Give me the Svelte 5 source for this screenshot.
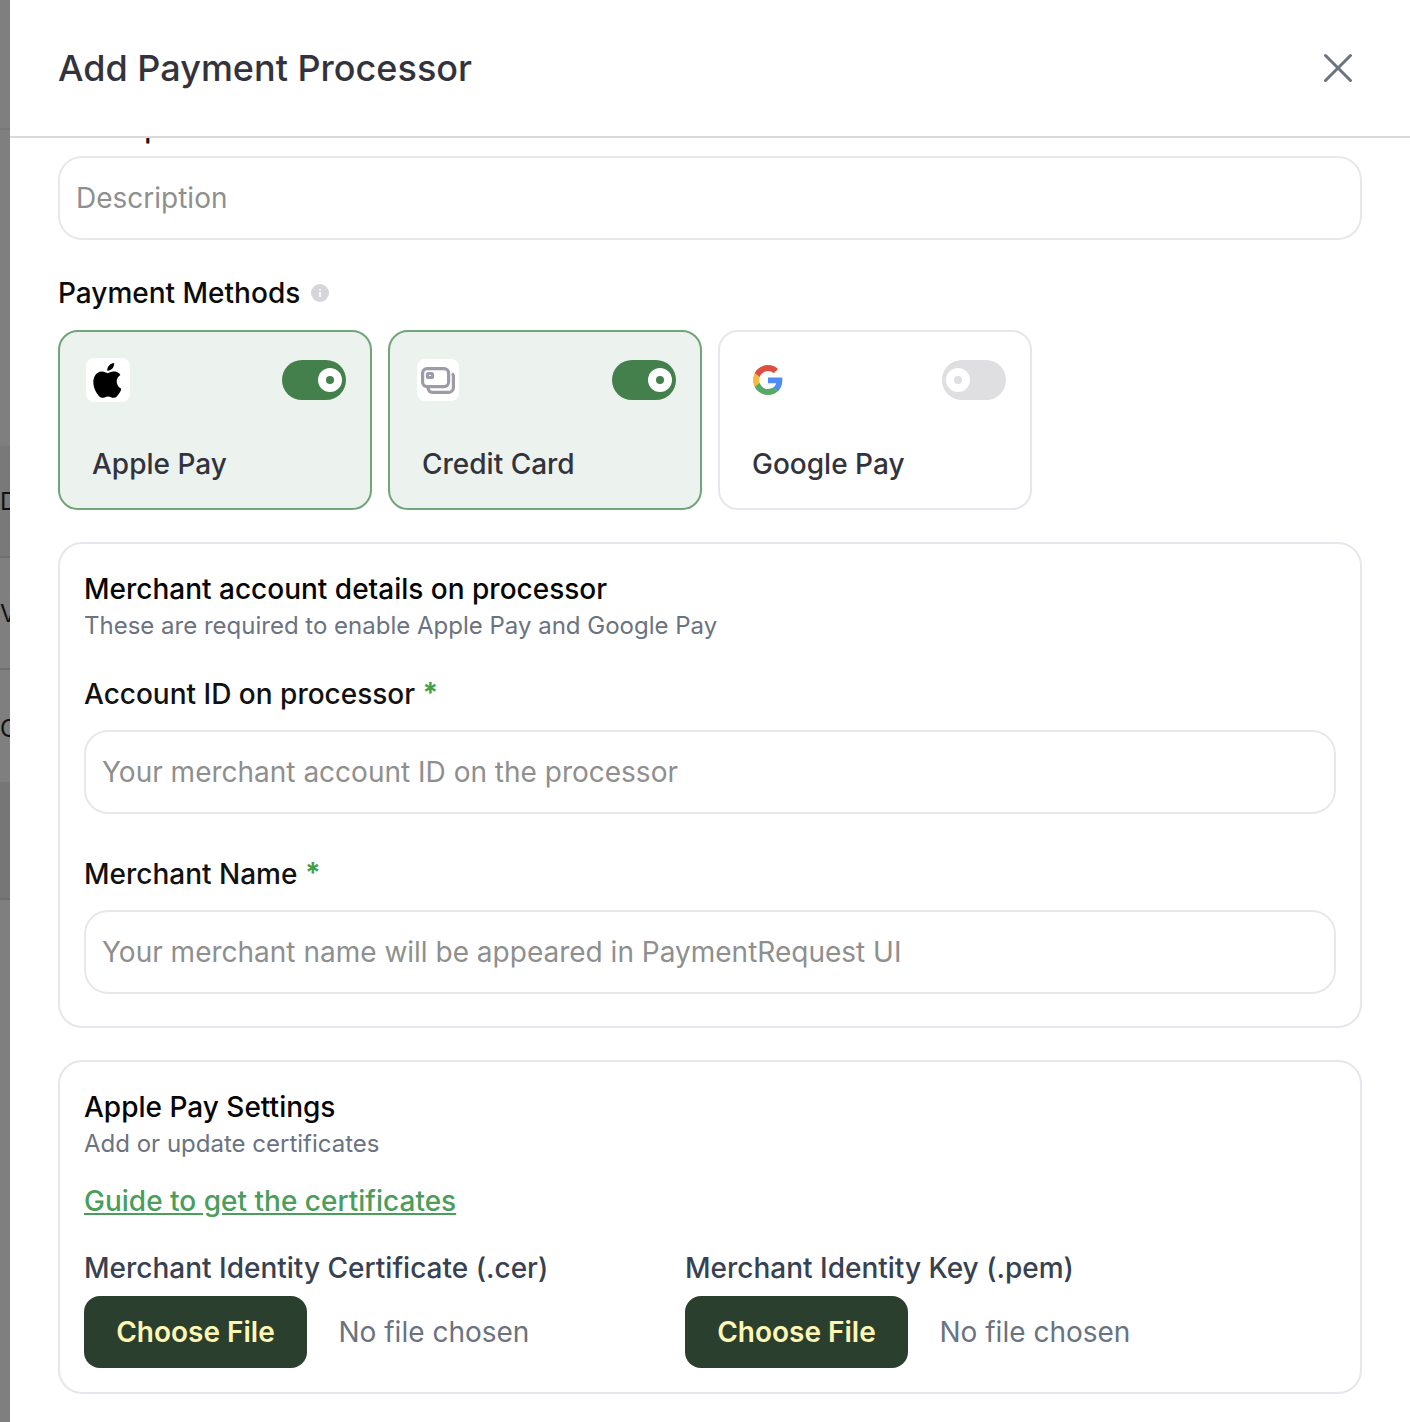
<script>
  const methods = [
    { name: 'Apple Pay', on: true, icon: 'apple' },
    { name: 'Credit Card', on: true, icon: 'card' },
    { name: 'Google Pay', on: false, icon: 'google' }
  ];
</script>

<div class="page">
  <aside class="backdrop">
    <div class="strip s0"></div>
    <div class="strip s1"></div>
    <div class="strip s2"><span>D</span></div>
    <div class="strip s3"><span>V</span></div>
    <div class="strip s4"><span>C</span></div>
    <div class="strip s5"></div>
    <div class="strip s6"></div>
  </aside>
  <main class="modal">
    <header class="head">
      <h1>Add Payment Processor</h1>
      <svg class="close" width="32" height="32" viewBox="0 0 32 32" fill="none" stroke="#6b7280" stroke-width="3" stroke-linecap="round"><path d="M3.500 3.500l25 25M28.500 3.500l-25 25" /></svg>
    </header>
    <div class="body">
      <div class="clipped">Description</div>
      <div class="input">Description</div>

      <div class="pm-label">Payment Methods
        <svg width="18" height="18" viewBox="0 0 18 18"><circle cx="9" cy="9" r="9" fill="#d6d6da"/><rect x="8.2" y="8" width="1.6" height="5" fill="#fff"/><rect x="8.2" y="5" width="1.6" height="1.6" fill="#fff"/></svg>
      </div>

      <div class="methods">
        {#each methods as m}
          <div class="method" class:on={m.on}>
            <div class="method-top">
              {#if m.icon === 'apple'}
                <div class="ico apple">
                  <svg class="apple-glyph" width="28" height="35" viewBox="2.8 3 17.4 22" fill="#000"><path d="M17.6 14.6c0-2.7 2.2-4 2.3-4.1-1.3-1.8-3.2-2.1-3.900-2.100-1.700-.2-3.200 1-4.100 1-.8 0-2.200-1-3.600-1-1.800 0-3.500 1.100-4.500 2.700-1.900 3.400-.5 8.300 1.400 11 .9 1.300 2 2.800 3.400 2.800 1.400-.1 1.900-.9 3.600-.9 1.600 0 2.100.9 3.600.9s2.400-1.400 3.300-2.700c1-1.500 1.500-3 1.500-3.100-.1 0-2.900-1.100-3-4.500zM14.900 6.500c.7-.9 1.200-2.200 1.100-3.500-1.100 0-2.400.7-3.200 1.600-.7.8-1.300 2.100-1.100 3.300 1.200.1 2.400-.6 3.200-1.400z"/></svg>
                </div>
              {:else if m.icon === 'card'}
                <div class="ico card">
                  <svg width="34" height="27" viewBox="0 0 34 27" fill="none" stroke="#9c9ca8" stroke-width="3.200"><rect x="1.600" y="1.600" width="26" height="18" rx="4.500"/><rect x="6.500" y="6.500" width="5" height="4" rx="1"/><path d="M31 6.500A3 3 0 0 1 32.400 9v11.400a5 5 0 0 1-5 5H11.500a5 5 0 0 1-4.500-4.500"/></svg>
                </div>
              {:else}
                <div class="ico google">
                  <svg width="30" height="30" viewBox="0 0 48 48"><path fill="#dd4f3f" d="M24 9.500c3.540 0 6.710 1.220 9.210 3.600l6.850-6.850C35.900 2.380 30.470 0 24 0 14.620 0 6.510 5.380 2.560 13.220l7.980 6.190C12.430 13.720 17.740 9.500 24 9.500z"/><path fill="#4f8df5" d="M46.980 24.550c0-1.570-.15-3.090-.38-4.550H24v9.020h12.940c-.58 2.960-2.260 5.480-4.780 7.180l7.730 6c4.510-4.180 7.090-10.360 7.090-17.650z"/><path fill="#f5bb3f" d="M10.530 28.590c-.48-1.450-.76-2.990-.76-4.590s.27-3.140.76-4.590l-7.980-6.190C.92 16.460 0 20.120 0 24c0 3.880.92 7.540 2.560 10.780l7.970-6.190z"/><path fill="#58a866" d="M24 48c6.480 0 11.930-2.130 15.890-5.810l-7.730-6c-2.150 1.450-4.920 2.300-8.160 2.300-6.260 0-11.570-4.220-13.470-9.910l-7.980 6.190C6.510 42.620 14.620 48 24 48z"/></svg>
                </div>
              {/if}
              <div class="toggle" class:active={m.on}><span class="knob"><span class="dot"></span></span></div>
            </div>
            <div class="method-name">{m.name}</div>
          </div>
        {/each}
      </div>

      <section class="panel merchant">
        <h2>Merchant account details on processor</h2>
        <p>These are required to enable Apple Pay and Google Pay</p>
        <div class="field-label l1">Account ID on processor <b>*</b></div>
        <div class="input">Your merchant account ID on the processor</div>
        <div class="field-label l2">Merchant Name <b>*</b></div>
        <div class="input">Your merchant name will be appeared in PaymentRequest UI</div>
      </section>

      <section class="panel applepay">
        <h2>Apple Pay Settings</h2>
        <p>Add or update certificates</p>
        <a href="#guide" class="guide">Guide to get the certificates</a>
        <div class="files">
          <div>
            <div class="file-label">Merchant Identity Certificate (.cer)</div>
            <div class="file-row"><span class="btn">Choose File</span><span class="none">No file chosen</span></div>
          </div>
          <div>
            <div class="file-label">Merchant Identity Key (.pem)</div>
            <div class="file-row"><span class="btn">Choose File</span><span class="none">No file chosen</span></div>
          </div>
        </div>
      </section>
    </div>
  </main>
</div>

<style>
  :global(body) { margin: 0; background: #fff; }
  .page { display: flex; height: 1422px; overflow: hidden; font-family: Inter, "Liberation Sans", sans-serif; }
  .backdrop { width: 10px; flex: none; display: flex; flex-direction: column; background: #7f7f7f; overflow: hidden; }
  .strip { flex: none; box-sizing: border-box; font-size: 24px; line-height: 1; color: #111; white-space: nowrap; display: flex; align-items: center; }
  .s0 { height: 130px; border-bottom: 2px solid #777; }
  .s1 { height: 316px; }
  .s2 { height: 112px; padding-top: 2px; border-bottom: 2px solid #6e6e6e; background: #797979; }
  .s3 { height: 112px; padding-top: 2px; border-bottom: 2px solid #6e6e6e; }
  .s4 { height: 112px; padding-top: 6px; }
  .s5 { height: 118px; background: #767676; border-bottom: 2px solid #6e6e6e; }
  .s6 { flex: 1; }
  .modal { flex: 1; min-width: 0; display: flex; flex-direction: column; background: #fff; }
  .head { height: 136px; flex: none; box-sizing: border-box; padding: 0 56px 0 48px; display: flex; align-items: center; justify-content: space-between; }
  .head h1 { margin: 0; font-size: 36px; font-weight: 500; color: #33333d; line-height: 1; }
  .body { flex: 1; border-top: 2px solid #d9d9d9; padding: 0 48px; overflow: hidden; }
  .clipped { height: 7px; margin-bottom: 11px; overflow: hidden; font-size: 28px; font-weight: 500; line-height: 34px; color: #111; display: flex; align-items: flex-end; }
  .input { box-sizing: border-box; height: 84px; border: 2px solid #e8e8e8; border-radius: 24px; padding: 0 16px; display: flex; align-items: center; font-size: 28px; color: #8f8f8f; background: #fff; }
  .pm-label { margin-top: 36px; font-size: 28px; font-weight: 500; line-height: 34px; color: #0b0b0b; display: flex; align-items: center; gap: 11px; }
  .methods { margin-top: 20px; display: flex; gap: 16px; }
  .method { box-sizing: border-box; width: 314px; height: 180px; border: 2px solid #e6e6ec; border-radius: 20px; padding: 26px 24px 0 32px; background: #fff; }
  .method.on { border-color: #72a479; background: #ecf2ee; }
  .method-top { height: 44px; display: flex; align-items: center; justify-content: space-between; }
  .ico { display: flex; align-items: center; justify-content: center; background: #fff; border-radius: 8px; }
  .apple { width: 44px; height: 44px; margin-left: -6px; }
  .apple-glyph { margin-right: 2px; }
  .card { width: 42px; height: 42px; margin-left: -5px; }
  .google { width: 32px; height: 32px; background: transparent; }
  .toggle { width: 64px; height: 40px; border-radius: 20px; background: #dfdfe1; display: flex; align-items: center; justify-content: flex-start; padding: 0 4px; box-sizing: border-box; }
  .toggle.active { background: #43804c; justify-content: flex-end; }
  .knob { width: 24px; height: 24px; border-radius: 50%; background: #fff; display: flex; align-items: center; justify-content: center; }
  .dot { width: 8px; height: 8px; border-radius: 50%; background: #dfdfe1; }
  .active .dot { background: #43804c; }
  .method-name { margin-top: 45px; font-size: 28px; font-weight: 500; line-height: 34px; color: #33333d; }
  .panel { box-sizing: border-box; border: 2px solid #e6e6ec; border-radius: 24px; padding: 0 24px; background: #fff; }
  .merchant { margin-top: 32px; height: 486px; padding-top: 28px; }
  .applepay { margin-top: 32px; height: 334px; padding-top: 28px; }
  h2 { margin: 0; font-size: 28px; font-weight: 500; line-height: 34px; color: #050505; }
  p { margin: 5px 0 0; font-size: 24px; line-height: 30px; color: #6b7280; }
  .field-label { font-size: 28px; font-weight: 500; line-height: 34px; color: #111; }
  .field-label b { color: #43a047; font-weight: 700; position: relative; top: -1px; }
  .l1 { margin-top: 36px; margin-bottom: 19px; }
  .l2 { margin-top: 43px; margin-bottom: 19px; }
  .guide { display: block; margin-top: 25px; font-size: 28px; font-weight: 500; line-height: 34px; color: #4a9d5b; text-decoration: underline; }
  .files { margin-top: 33px; display: grid; grid-template-columns: 601px 1fr; }
  .file-label { font-size: 28px; font-weight: 500; line-height: 34px; color: #374151; }
  .file-row { margin-top: 11px; display: flex; align-items: center; gap: 32px; }
  .btn { width: 223px; height: 72px; border-radius: 16px; background: #2b3f2e; color: #fdf6b5; font-size: 28px; font-weight: 600; display: flex; align-items: center; justify-content: center; }
  .none { font-size: 28px; color: #6b7280; margin-left: -0.5px; }
</style>
